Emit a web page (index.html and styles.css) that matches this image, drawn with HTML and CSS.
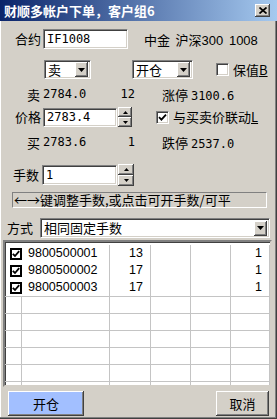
FILE: index.html
```html
<!DOCTYPE html>
<html lang="zh-CN">
<head>
    <meta charset="UTF-8">
    <meta name="viewport" content="width=device-width, initial-scale=1.0">
    <title>财顺多帐户下单</title>
    <link rel="stylesheet" href="styles.css">
</head>
<body>
    <div class="window">
        <div class="title-bar">
            <span class="title">财顺多帐户下单，客户组6</span>
            <span class="close-btn raised">
                <svg width="8" height="7" viewBox="0 0 8 7"><path d="M0.5 0.5L7.5 6.5M7.5 0.5L0.5 6.5" stroke="#000" stroke-width="1.7"/></svg>
            </span>
        </div>

        <div class="row row-contract">
            <label class="lbl">合约</label>
            <div class="field sunken contract-input"><span class="mono">IF1008</span></div>
            <span class="instrument">中金 沪深300 1008</span>
        </div>

        <div class="row row-selects">
            <div class="select sunken sel-dir">
                <span>卖</span>
                <span class="drop-btn raised"><svg width="7" height="4" viewBox="0 0 7 4"><path d="M0 0h7L3.5 4z"/></svg></span>
            </div>
            <div class="select sunken sel-open">
                <span>开仓</span>
                <span class="drop-btn raised"><svg width="7" height="4" viewBox="0 0 7 4"><path d="M0 0h7L3.5 4z"/></svg></span>
            </div>
            <span class="check sunken hedge-check"></span>
            <span class="check-label">保值<u>B</u></span>
        </div>

        <div class="row row-quote">
            <span class="side">卖</span>
            <span class="price mono">2784.0</span>
            <span class="vol mono">12</span>
            <span class="limit">涨停 <span class="mono">3100.6</span></span>
        </div>

        <div class="row row-price">
            <label class="lbl">价格</label>
            <div class="field sunken price-input"><span class="mono">2783.4</span></div>
            <div class="spinner">
                <span class="spin-btn raised"><svg width="5" height="3" viewBox="0 0 5 3"><path d="M0 3h5L2.5 0z"/></svg></span>
                <span class="spin-btn raised"><svg width="5" height="3" viewBox="0 0 5 3"><path d="M0 0h5L2.5 3z"/></svg></span>
            </div>
            <span class="check sunken link-check">
                <svg width="9" height="9" viewBox="0 0 9 9"><path d="M1 4.2l2.4 2.4L8 1.6" fill="none" stroke="#000" stroke-width="1.8"/></svg>
            </span>
            <span class="check-label">与买卖价联动<u>L</u></span>
        </div>

        <div class="row row-quote row-bid">
            <span class="side">买</span>
            <span class="price mono">2783.6</span>
            <span class="vol mono">1</span>
            <span class="limit">跌停 <span class="mono">2537.0</span></span>
        </div>

        <div class="row row-qty">
            <label class="lbl">手数</label>
            <div class="field sunken qty-input"><span class="mono">1</span></div>
            <div class="spinner spinner-qty">
                <span class="spin-btn raised"><svg width="5" height="3" viewBox="0 0 5 3"><path d="M0 3h5L2.5 0z"/></svg></span>
                <span class="spin-btn raised"><svg width="5" height="3" viewBox="0 0 5 3"><path d="M0 0h5L2.5 3z"/></svg></span>
            </div>
        </div>

        <div class="hint">←→键调整手数,或点击可开手数/可平</div>

        <div class="row row-method">
            <label class="lbl">方式</label>
            <div class="select sunken sel-method">
                <span>相同固定手数</span>
                <span class="drop-btn raised"><svg width="7" height="4" viewBox="0 0 7 4"><path d="M0 0h7L3.5 4z"/></svg></span>
            </div>
        </div>

        <div class="account-list sunken">
            <div class="grid-row data">
                <span class="cell"><span class="box"><svg width="8" height="8" viewBox="0 0 8 8"><path d="M0.8 3.8l2.2 2.2L7.2 1.2" fill="none" stroke="#000" stroke-width="1.8"/></svg></span></span>
                <span class="cell acct">9800500001</span>
                <span class="cell num">13</span>
                <span class="cell"></span>
                <span class="cell"></span>
                <span class="cell num">1</span>
            </div>
            <div class="grid-row data">
                <span class="cell"><span class="box"><svg width="8" height="8" viewBox="0 0 8 8"><path d="M0.8 3.8l2.2 2.2L7.2 1.2" fill="none" stroke="#000" stroke-width="1.8"/></svg></span></span>
                <span class="cell acct">9800500002</span>
                <span class="cell num">17</span>
                <span class="cell"></span>
                <span class="cell"></span>
                <span class="cell num">1</span>
            </div>
            <div class="grid-row data">
                <span class="cell"><span class="box"><svg width="8" height="8" viewBox="0 0 8 8"><path d="M0.8 3.8l2.2 2.2L7.2 1.2" fill="none" stroke="#000" stroke-width="1.8"/></svg></span></span>
                <span class="cell acct">9800500003</span>
                <span class="cell num">17</span>
                <span class="cell"></span>
                <span class="cell"></span>
                <span class="cell num">1</span>
            </div>
            <div class="grid-row empty"><span class="cell"></span><span class="cell"></span><span class="cell"></span><span class="cell"></span><span class="cell"></span><span class="cell"></span></div>
            <div class="grid-row empty"><span class="cell"></span><span class="cell"></span><span class="cell"></span><span class="cell"></span><span class="cell"></span><span class="cell"></span></div>
            <div class="grid-row empty"><span class="cell"></span><span class="cell"></span><span class="cell"></span><span class="cell"></span><span class="cell"></span><span class="cell"></span></div>
            <div class="grid-row empty"><span class="cell"></span><span class="cell"></span><span class="cell"></span><span class="cell"></span><span class="cell"></span><span class="cell"></span></div>
            <div class="grid-row empty"><span class="cell"></span><span class="cell"></span><span class="cell"></span><span class="cell"></span><span class="cell"></span><span class="cell"></span></div>
            <div class="grid-row empty"><span class="cell"></span><span class="cell"></span><span class="cell"></span><span class="cell"></span><span class="cell"></span><span class="cell"></span></div>
        </div>

        <div class="row row-buttons">
            <button class="btn raised btn-open">开仓</button>
            <button class="btn raised btn-cancel">取消</button>
        </div>
    </div>
</body>
</html>
```

FILE: styles.css
```css
* {
    box-sizing: border-box;
}
body {
    margin: 0;
    background: #d4d0c8;
    font-family: "Noto Sans CJK SC", sans-serif;
    font-size: 13px;
    color: #000;
}
.window {
    width: 277px;
    height: 419px;
    display: flex;
    flex-direction: column;
    overflow: hidden;
    box-shadow: inset -1px -1px #404040, inset -2px -2px #808080, inset 1px 0 #fff;
}
.title-bar {
    flex: none;
    height: 21px;
    display: flex;
    align-items: center;
    justify-content: space-between;
    padding: 0 7px 0 4px;
    background: linear-gradient(90deg, #0a246a 0%, #a6caf0 100%);
    color: #fff;
    font-weight: bold;
    font-size: 13px;
}
.close-btn {
    width: 15px;
    height: 13px;
    display: flex;
    align-items: center;
    justify-content: center;
}
.raised {
    background: #d4d0c8;
    box-shadow: inset -1px -1px #404040, inset 1px 1px #fff, inset -2px -2px #808080;
}
.sunken {
    background: #fff;
    border: 1px solid;
    border-color: #808080 #fff #fff #808080;
    box-shadow: inset 1px 1px #404040, inset -1px -1px #d4d0c8;
}
.mono {
    font-family: "DejaVu Sans Mono", monospace;
    font-size: 12px;
}
.row {
    flex: none;
    display: flex;
    align-items: center;
}
.lbl {
    flex: none;
    line-height: 14px;
}
.field {
    display: flex;
    align-items: center;
    padding-left: 3px;
}

/* contract */
.row-contract {
    margin-top: 8px;
    height: 20px;
    padding-left: 15px;
}
.row-contract .lbl {
    width: 28px;
}
.contract-input {
    width: 85px;
    height: 20px;
}
.instrument {
    margin-left: 16px;
    font-family: "Liberation Sans", "Noto Sans CJK SC", sans-serif;
    word-spacing: 2px;
}

/* selects */
.select {
    display: flex;
    align-items: center;
    justify-content: space-between;
    padding: 0 2px 0 3px;
    line-height: 14px;
}
.drop-btn {
    width: 13px;
    height: 15px;
    display: flex;
    align-items: center;
    justify-content: center;
}
.row-selects {
    margin-top: 11px;
    height: 19px;
    padding-left: 44px;
}
.sel-dir {
    width: 47px;
    height: 19px;
}
.sel-open {
    width: 61px;
    height: 19px;
    margin-left: 41px;
}
.check {
    flex: none;
    width: 13px;
    height: 13px;
    display: flex;
    align-items: center;
    justify-content: center;
}
.hedge-check {
    margin-left: 23px;
}
.check-label {
    margin-left: 4px;
    line-height: 14px;
}

/* quotes */
.row-quote {
    margin-top: 7px;
    height: 16px;
    padding-left: 27px;
}
.side {
    width: 16px;
}
.price {
    width: 60px;
}
.vol {
    width: 32px;
    text-align: right;
}
.limit {
    margin-left: 27px;
}

/* price */
.row-price {
    margin-top: 5px;
    height: 20px;
    padding-left: 15px;
}
.row-price .lbl {
    width: 28px;
}
.price-input {
    width: 74px;
    height: 19px;
}
.spinner {
    margin-left: 1px;
    width: 14px;
    height: 20px;
    display: flex;
    flex-direction: column;
}
.spin-btn {
    flex: 1;
    display: flex;
    align-items: center;
    justify-content: center;
}
.link-check {
    margin-left: 24px;
}

/* quantity */
.row-qty {
    margin-top: 14px;
    height: 22px;
    padding-left: 13px;
}
.row-qty .lbl {
    width: 29px;
}
.qty-input {
    width: 75px;
    height: 20px;
}
.spinner-qty {
    width: 16px;
    height: 22px;
}

.hint {
    flex: none;
    margin: 6px 0 0 12px;
    width: 255px;
    height: 16px;
    padding-left: 1px;
    border: 1px solid;
    border-color: #808080 #fff #fff #808080;
    line-height: 14px;
    white-space: nowrap;
}

/* method */
.row-method {
    margin-top: 10px;
    height: 20px;
    padding-left: 7px;
}
.row-method .lbl {
    width: 33px;
}
.sel-method {
    width: 230px;
    height: 20px;
}

/* account list */
.account-list {
    flex: none;
    margin: 2px 0 0 3px;
    width: 269px;
    height: 147px;
    border-width: 2px;
    border-color: #808080 #d4d0c8 #d4d0c8 #808080;
    box-shadow: inset 1px 1px #404040;
    padding-top: 3px;
    overflow: hidden;
    font-family: "Liberation Sans", sans-serif;
    font-size: 12.5px;
}
.grid-row {
    display: grid;
    grid-template-columns: 17px 88px 41px 40px 40px 39px;
    height: 17px;
}
.cell {
    display: flex;
    align-items: center;
    border-right: 1px solid #c4c4c4;
    line-height: 15px;
}
.data .cell:first-child {
    border-right: none;
}
.empty .cell {
    border-top: 1px solid #c4c4c4;
}
.box {
    margin-left: 5px;
    width: 12px;
    height: 12px;
    border: 2px solid #000;
    background: #fff;
    display: flex;
    align-items: center;
    justify-content: center;
}
.acct {
    padding-left: 6px;
}
.num {
    justify-content: flex-end;
    padding-right: 7px;
}

/* buttons */
.row-buttons {
    margin-top: 4px;
    height: 25px;
    padding: 0 8px;
    justify-content: space-between;
}
.btn {
    height: 25px;
    border: none;
    font-family: "Noto Sans CJK SC", sans-serif;
    font-size: 13px;
    color: #000;
    padding: 0;
}
.btn-open {
    width: 76px;
    background: #a2bfff;
}
.btn-cancel {
    width: 53px;
}
```
